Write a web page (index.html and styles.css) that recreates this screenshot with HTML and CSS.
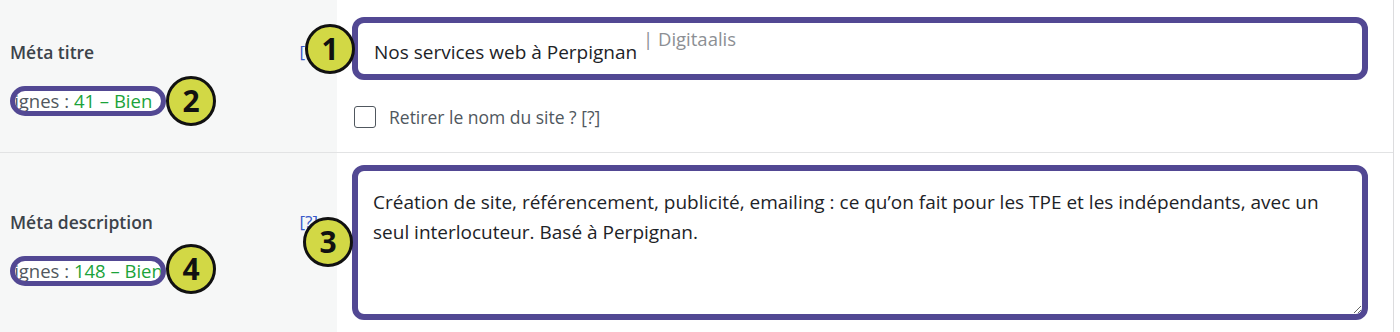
FILE: index.html
```html
<!DOCTYPE html>
<html lang="fr">
<head>
    <meta charset="UTF-8">
    <title>Méta SEO</title>
    <link rel="stylesheet" href="styles.css">
</head>
<body>
    <div class="seo-table">
        <div class="seo-row row-title">
            <div class="label-cell">
                <div class="label-line">
                    <span class="label-name">Méta titre</span>
                    <a class="help" href="#">[?]</a>
                </div>
                <div class="counter"><span class="counter-text">Signes : <span class="ok">41 – Bien</span></span></div>
            </div>
            <div class="field-cell">
                <div class="title-wrap">
                    <input type="text" class="title-input" value="Nos services web à Perpignan">
                    <span class="site-suffix">| Digitaalis</span>
                </div>
                <label class="check-line">
                    <span class="check-box"></span>
                    Retirer le nom du site ? [?]
                </label>
            </div>
            <span class="badge badge-1">1</span>
            <span class="badge badge-2">2</span>
        </div>

        <div class="seo-row row-desc">
            <div class="label-cell">
                <div class="label-line">
                    <span class="label-name">Méta description</span>
                    <a class="help" href="#">[?]</a>
                </div>
                <div class="counter"><span class="counter-text">Signes : <span class="ok">148 – Bien</span></span></div>
            </div>
            <div class="field-cell">
                <textarea class="desc-input">Création de site, référencement, publicité, emailing : ce qu’on fait pour les TPE et les indépendants, avec un seul interlocuteur. Basé à Perpignan.</textarea>
            </div>
            <span class="badge badge-3">3</span>
            <span class="badge badge-4">4</span>
        </div>
    </div>
</body>
</html>
```

FILE: styles.css
```css
body {
    margin: 0;
    font-family: "Open Sans", "Noto Sans", sans-serif;
    color: #1d2327;
    background: #fff;
    overflow: hidden;
}

.seo-table {
    width: 1393px;
    border-right: 1px solid #dcdcde;
}

.seo-row {
    position: relative;
    display: grid;
    grid-template-columns: 337px 1fr;
    border-bottom: 1px solid #e2e3e4;
}

.row-title {
    height: 152px;
}

.row-desc {
    height: 200px;
}

.label-cell {
    background: #f6f7f7;
    padding: 0 19px 0 10px;
}

.row-title .label-cell {
    padding-top: 41px;
}

.row-desc .label-cell {
    padding-top: 58px;
}

.label-line {
    display: flex;
    justify-content: space-between;
    line-height: 22px;
}

.label-name {
    font-size: 17.5px;
    font-weight: 600;
    color: #3c434a;
}

.help {
    font-size: 17px;
    color: #3858c9;
    text-decoration: none;
}

.counter {
    margin-top: 23px;
    width: 146px;
    height: 20px;
    border: 5px solid #524893;
    border-radius: 15px;
    background: #fff;
    overflow: hidden;
    white-space: nowrap;
    font-size: 18.5px;
    line-height: 20px;
    color: #50575e;
}

.counter-text {
    display: inline-block;
    margin-left: -11px;
}

.ok {
    color: #1ba33a;
}

.field-cell {
    padding: 17px 25px 0 15px;
}

.row-desc .field-cell {
    padding-top: 12px;
}

.title-wrap {
    position: relative;
}

.title-input {
    box-sizing: border-box;
    width: 100%;
    height: 63px;
    border: 6px solid #524893;
    border-radius: 12px;
    padding: 6px 16px 0;
    font-family: inherit;
    font-size: 19px;
    color: #1d2327;
    outline: none;
}

.site-suffix {
    position: absolute;
    left: 291px;
    top: 9px;
    font-size: 18.5px;
    color: #8c8f94;
}

.check-line {
    display: flex;
    align-items: center;
    gap: 13px;
    margin-top: 25px;
    margin-left: 2px;
    font-size: 17.5px;
    color: #50575e;
}

.check-box {
    width: 20px;
    height: 20px;
    border: 1px solid #50575e;
    border-radius: 3px;
}

.desc-input {
    box-sizing: border-box;
    display: block;
    width: 100%;
    height: 155px;
    border: 6px solid #524893;
    border-radius: 12px;
    padding: 16px 15px;
    font-family: inherit;
    font-size: 19px;
    line-height: 30px;
    color: #1d2327;
    outline: none;
}

.badge {
    position: absolute;
    width: 44px;
    height: 44px;
    border: 3px solid #111;
    border-radius: 50%;
    background: #d2d845;
    color: #111;
    font-family: "Open Sans", sans-serif;
    font-weight: 700;
    font-size: 30px;
    line-height: 44px;
    text-align: center;
}

.badge-1 {
    left: 305px;
    top: 24px;
}

.badge-2 {
    left: 166px;
    top: 76px;
}

.badge-3 {
    left: 303px;
    top: 64px;
}

.badge-4 {
    left: 166px;
    top: 91px;
}
```
